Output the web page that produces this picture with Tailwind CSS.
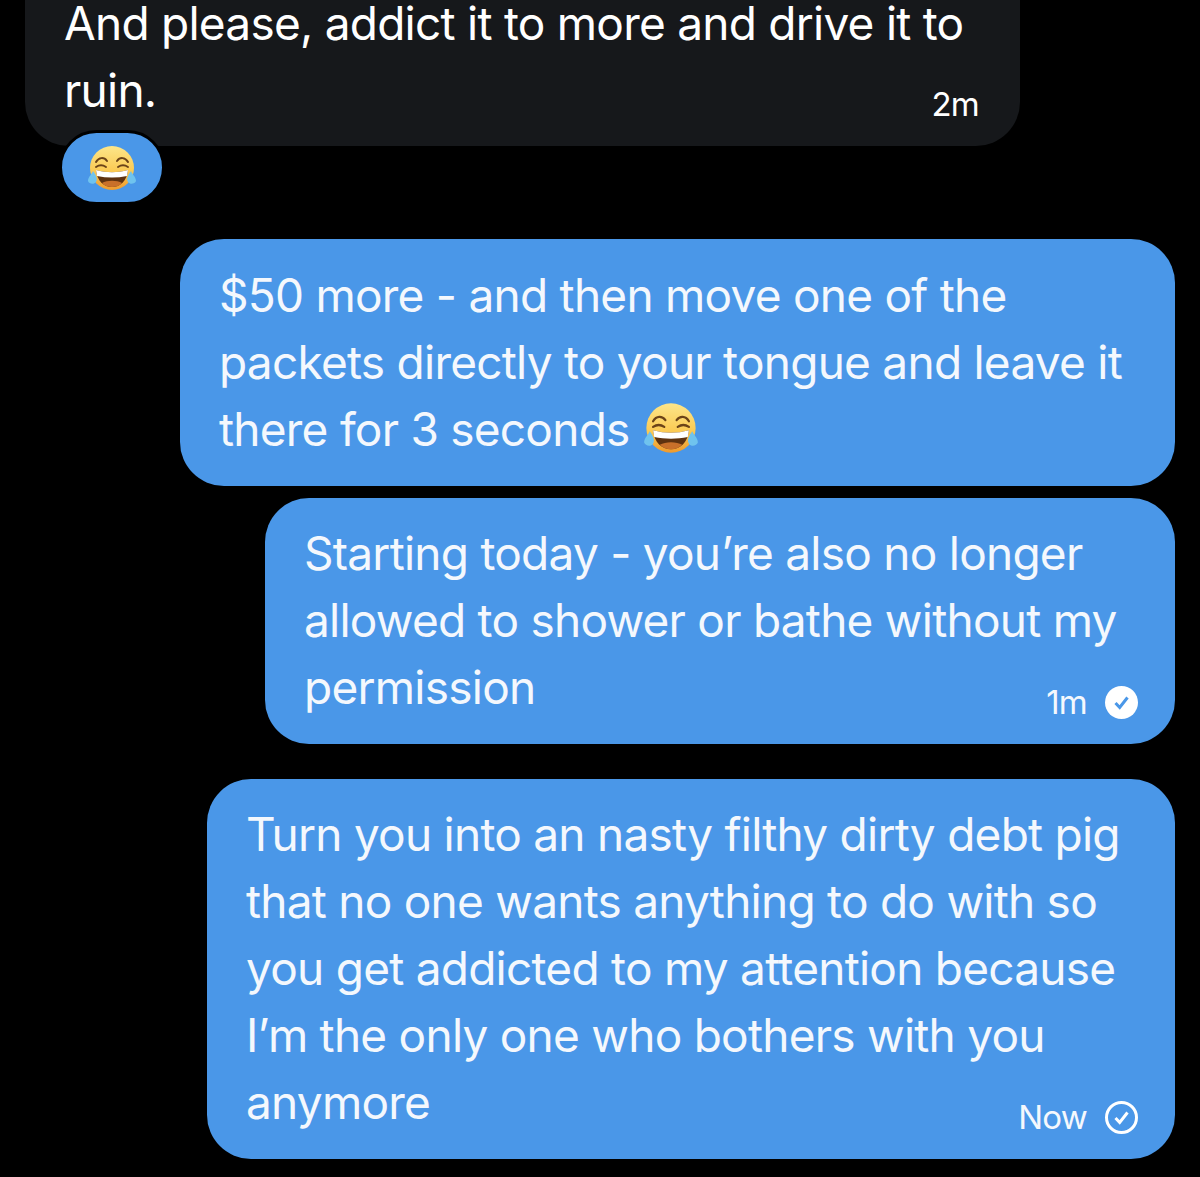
<!DOCTYPE html>
<html lang="en">
<head>
    <meta charset="UTF-8">
    <title>Messages</title>
    <script src="https://cdn.jsdelivr.net/npm/@tailwindcss/browser@4"></script>
</head>
<body class="bg-black">
    <div class="relative h-[1177px] w-[1200px] overflow-hidden bg-black font-['Inter',sans-serif] text-[46px] leading-[67px] tracking-[-0.75px] text-[#f4f8fd]">

        <!-- received message -->
        <div class="relative ml-[25px] mt-[-20px] h-[166px] w-[995px] rounded-b-[44px] bg-[#16181b] pl-[39px] pt-[10px] text-white">
            <p class="whitespace-nowrap">And please, addict it to more and drive it to<br>ruin.</p>
            <span class="absolute bottom-[22px] right-[41px] text-[33px] leading-[40px]">2m</span>
            <!-- reaction -->
            <div class="absolute left-[34px] top-[150px] flex h-[75px] w-[106px] items-center justify-center rounded-[38px] border-[3px] border-black bg-[#4a97e8]">
                <svg class="h-[48px] w-[50px]" viewBox="0 0 50 48">
                    <defs>
                        <linearGradient id="face1" x1="0" y1="0" x2="0" y2="1">
                            <stop offset="0" stop-color="#fde68a"/>
                            <stop offset="0.55" stop-color="#fbcb55"/>
                            <stop offset="1" stop-color="#ee9a2e"/>
                        </linearGradient>
                    </defs>
                    <circle cx="25" cy="24" r="22" fill="url(#face1)"/>
                    <path d="M9 18c3-5 8-5 11-1M41 18c-3-5-8-5-11-1" fill="none" stroke="#6b4318" stroke-width="2" stroke-linecap="round"/>
                    <path d="M9 23c3-2 7-2 10 0M41 23c-3-2-7-2-10 0" fill="none" stroke="#6b4318" stroke-width="2" stroke-linecap="round"/>
                    <path d="M9 26c11 3 21 3 32 0-1 11-8 17-16 17S10 37 9 26z" fill="#5e3210"/>
                    <path d="M9 26c11 3 21 3 32 0l-1 6c-10 2-20 2-30 0z" fill="#fff"/>
                    <path d="M15 39c5-3 15-3 20 0-3 3-6 4-10 4s-7-1-10-4z" fill="#c9702a"/>
                    <path d="M6 27c-1 3-5 6-5 10 1 3 6 4 8 1 2-3 0-7-3-11zM44 27c1 3 5 6 5 10-1 3-6 4-8 1-2-3 0-7 3-11z" fill="#6fc3ee"/>
                </svg>
            </div>
        </div>

        <!-- sent messages -->
        <div class="ml-[180px] mt-[93px] h-[247px] w-[995px] rounded-[44px] bg-[#4a97e8] pl-[39px] pt-[23px]">
            <p class="whitespace-nowrap">$50 more - and then move one of the<br>packets directly to your tongue and leave it<br>there for 3 seconds
                <svg class="ml-[1px] inline-block h-[54px] w-[56px] align-[-9px]" viewBox="0 0 50 48">
                    <defs>
                        <linearGradient id="face2" x1="0" y1="0" x2="0" y2="1">
                            <stop offset="0" stop-color="#fde68a"/>
                            <stop offset="0.55" stop-color="#fbcb55"/>
                            <stop offset="1" stop-color="#ee9a2e"/>
                        </linearGradient>
                    </defs>
                    <circle cx="25" cy="24" r="22" fill="url(#face2)"/>
                    <path d="M9 18c3-5 8-5 11-1M41 18c-3-5-8-5-11-1" fill="none" stroke="#6b4318" stroke-width="2" stroke-linecap="round"/>
                    <path d="M9 23c3-2 7-2 10 0M41 23c-3-2-7-2-10 0" fill="none" stroke="#6b4318" stroke-width="2" stroke-linecap="round"/>
                    <path d="M9 26c11 3 21 3 32 0-1 11-8 17-16 17S10 37 9 26z" fill="#5e3210"/>
                    <path d="M9 26c11 3 21 3 32 0l-1 6c-10 2-20 2-30 0z" fill="#fff"/>
                    <path d="M15 39c5-3 15-3 20 0-3 3-6 4-10 4s-7-1-10-4z" fill="#c9702a"/>
                    <path d="M6 27c-1 3-5 6-5 10 1 3 6 4 8 1 2-3 0-7-3-11zM44 27c1 3 5 6 5 10-1 3-6 4-8 1-2-3 0-7 3-11z" fill="#6fc3ee"/>
                </svg>
            </p>
        </div>

        <div class="relative ml-[265px] mt-[12px] h-[246px] w-[910px] rounded-[44px] bg-[#4a97e8] pl-[39px] pt-[22px]">
            <p class="whitespace-nowrap">Starting today - you’re also no longer<br>allowed to shower or bathe without my<br>permission</p>
            <div class="absolute bottom-[22px] right-[37px] flex items-center gap-[18px] text-[33px] leading-[40px]">
                <span>1m</span>
                <svg class="h-[33px] w-[33px]" viewBox="0 0 33 33">
                    <circle cx="16.5" cy="16.5" r="16.5" fill="#fff"/>
                    <path d="M10.5 17l4.2 4.5 7.8-10" fill="none" stroke="#4a97e8" stroke-width="3"/>
                </svg>
            </div>
        </div>

        <div class="relative ml-[207px] mt-[35px] h-[380px] w-[968px] rounded-[44px] bg-[#4a97e8] pl-[39px] pt-[22px]">
            <p class="whitespace-nowrap">Turn you into an nasty filthy dirty debt pig<br>that no one wants anything to do with so<br>you get addicted to my attention because<br>I’m the only one who bothers with you<br>anymore</p>
            <div class="absolute bottom-[22px] right-[37px] flex items-center gap-[18px] text-[33px] leading-[40px]">
                <span>Now</span>
                <svg class="h-[33px] w-[33px]" viewBox="0 0 33 33">
                    <circle cx="16.5" cy="16.5" r="15" fill="none" stroke="#fff" stroke-width="3"/>
                    <path d="M10.5 17l4.2 4.5 7.8-10" fill="none" stroke="#fff" stroke-width="3"/>
                </svg>
            </div>
        </div>
    </div>
</body>
</html>
